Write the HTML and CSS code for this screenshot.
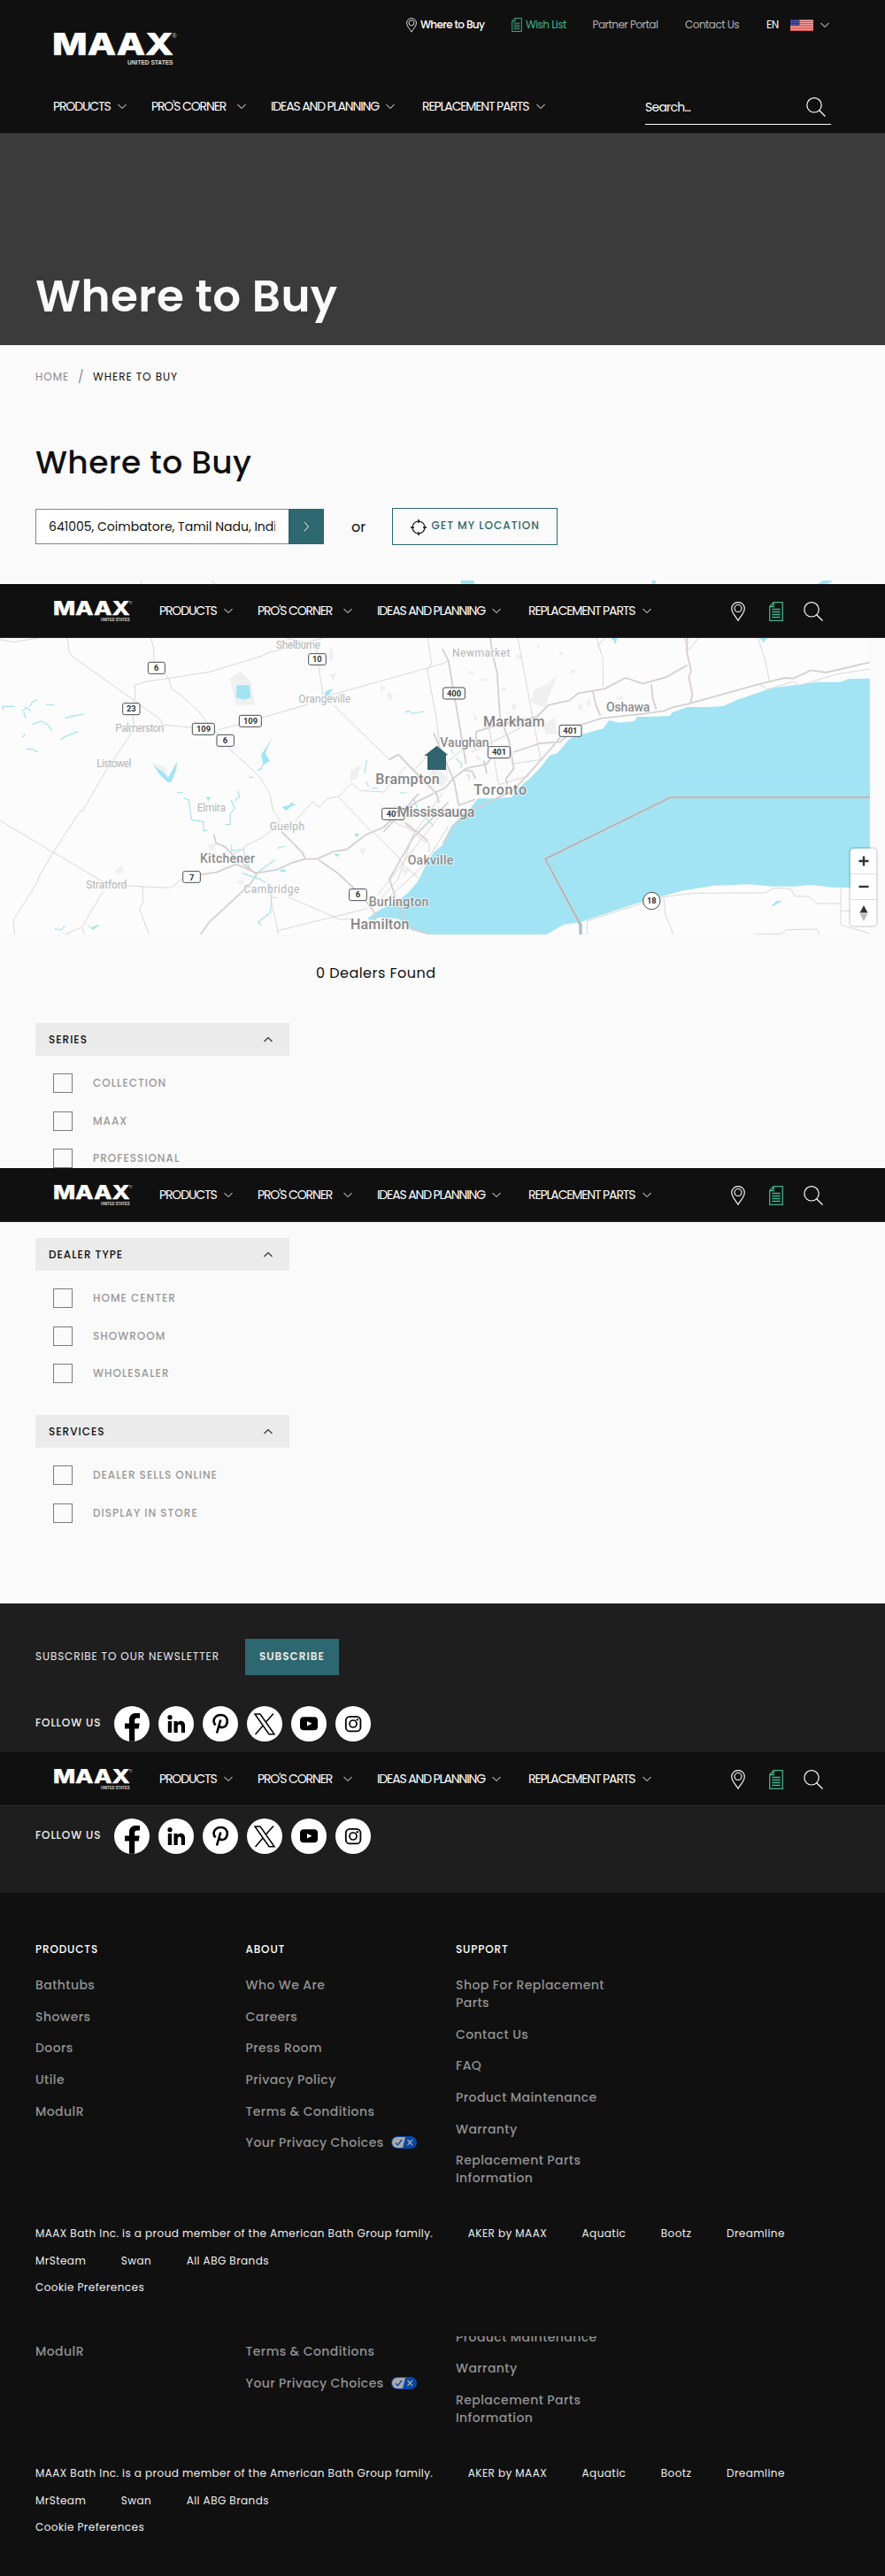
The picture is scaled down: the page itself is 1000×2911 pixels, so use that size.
FILE: index.html
```html
<!DOCTYPE html>
<html lang="en">
<head>
<meta charset="utf-8">
<title>Where to Buy | MAAX</title>
<link rel="stylesheet" href="styles.css">
</head>
<body>
<svg class="defs" aria-hidden="true">
  <symbol id="logo" viewBox="0 0 140 37" overflow="visible">
    <text x="-1" y="25.3" font-family="Inter, sans-serif" font-weight="800" font-size="34" textLength="137" lengthAdjust="spacingAndGlyphs" fill="#fff" stroke="#fff" stroke-width=".5">MAAX</text>
    <text x="84" y="35.5" font-family="Liberation Sans, sans-serif" font-size="7" font-weight="700" textLength="51.5" lengthAdjust="spacingAndGlyphs" fill="#ddd">UNITED STATES</text>
    <text x="134.5" y="5.5" font-family="Liberation Sans, sans-serif" font-size="7" fill="#ccc">®</text>
  </symbol>
  <symbol id="down" viewBox="0 0 10 7"><path d="M.5 1 5 5.500 9.500 1" fill="none" stroke="#fff" stroke-width="1"/></symbol>
  <symbol id="up" viewBox="0 0 10 7"><path d="M.5 6 5 1.500 9.500 6" fill="none" stroke="#333" stroke-width="1.200"/></symbol>
  <symbol id="pin" viewBox="0 0 16 22"><path d="M8 21.300C6.500 18 .7 12.800.7 7.700a7.300 7.100 0 0 1 14.600 0C15.300 12.800 9.500 18 8 21.300Z" fill="none" stroke="#fff" stroke-width="1.100"/><circle cx="8" cy="7.500" r="4" fill="none" stroke="#fff" stroke-width="1.100"/></symbol>
  <symbol id="doc" viewBox="0 0 16 22"><path d="M5.200.7H15.300V21.300H.7V5.500ZM5.200.7V5.500H.7M3.300 8.500H12.700M3.300 11.500H12.700M3.300 14.500H12.700M3.300 17.500H12.700" fill="none" stroke="#3eb489" stroke-width="1.300"/></symbol>
  <symbol id="search" viewBox="0 0 22 22"><circle cx="9" cy="8.800" r="8.200" fill="none" stroke="#fff" stroke-width="1.200"/><path d="M14.500 14.500 21.500 21.500" stroke="#fff" stroke-width="1.300"/></symbol>
  <symbol id="fb" viewBox="0 0 40 40"><circle cx="20" cy="20" r="20" fill="#fff"/><path d="M17 39.800V25.500H12V19.500H17V15.500C17 10.500 20 8 24.500 8H29V13.500H26C24 13.500 23.200 14.500 23.200 16V19.500H28.700L27.700 25.500H23.200V39.800Z"/></symbol>
  <symbol id="li" viewBox="0 0 40 40"><circle cx="20" cy="20" r="20" fill="#fff"/><circle cx="13" cy="12.700" r="2.600"/><path d="M10.800 17H15V30H10.800ZM17.500 17H21.500V18.800C24 15.500 30 16.300 30 22V30H25.800V23C25.800 19.500 21.700 19.700 21.700 23V30H17.500Z"/></symbol>
  <symbol id="pt" viewBox="0 0 40 40"><circle cx="20" cy="20" r="20" fill="#fff"/><path d="M14.500 21.500C10 16 14 9.800 21 10C28 10.500 29 17 26.500 21.500C24.500 24.500 20.500 25 18.800 22.500M20.300 15.500 16 30.500" fill="none" stroke="#000" stroke-width="2.600"/></symbol>
  <symbol id="xx" viewBox="0 0 40 40"><circle cx="20" cy="20" r="20" fill="#fff"/><path d="M9 9H15L31 31.800H25ZM30 8.500 21 18.500M18.500 21.500 9.500 32" fill="none" stroke="#000" stroke-width="1.500"/></symbol>
  <symbol id="yt" viewBox="0 0 40 40"><circle cx="20" cy="20" r="20" fill="#fff"/><rect x="10" y="12.300" width="20" height="15" rx="4"/><path d="M18 17V22.500L23.500 19.700Z" fill="#fff"/></symbol>
  <symbol id="ig" viewBox="0 0 40 40"><circle cx="20" cy="20" r="20" fill="#fff"/><rect x="11.800" y="11.800" width="16.600" height="16.600" rx="4.500" fill="none" stroke="#000" stroke-width="1.800"/><circle cx="20" cy="20" r="4" fill="none" stroke="#000" stroke-width="1.700"/><circle cx="24.800" cy="15.300" r="1.200"/></symbol>
  <symbol id="choices" viewBox="0 0 29 14"><rect width="29" height="14" rx="7" fill="#0a47a5"/><path d="M7 1H16L13 13H7A6 6 0 0 1 7 1Z" fill="#aaa"/><path d="M5 7.500 7.500 10 12 4" fill="none" stroke="#0a47a5" stroke-width="1.300"/><path d="M18.500 4 24 10M24 4 18.500 10" stroke="#aaa" stroke-width="1.200"/></symbol>
</svg>

<header class="header">
  <svg class="logo"><use href="#logo"/></svg>
  <ul class="top-links">
    <li class="buy"><svg><use href="#pin"/></svg>Where to Buy</li>
    <li class="wish"><svg><use href="#doc"/></svg>Wish List</li>
    <li class="portal">Partner Portal</li>
    <li class="contact">Contact Us</li>
    <li class="lang">EN
      <svg class="flag" viewBox="0 0 26 13"><rect width="26" height="13" fill="#e9a9a4"/><path d="M0 .5H26M0 2.500H26M0 4.500H26M0 6.500H26M0 8.500H26M0 10.500H26M0 12.500H26" stroke="#d9514e"/><rect width="10.500" height="7" fill="#2e3480"/><path d="M1 1.500H10M1 3.500H10M1 5.500H10" stroke="#8b8fc0" stroke-width=".7" stroke-dasharray="1 1"/></svg>
      <svg class="chev"><use href="#down"/></svg>
    </li>
  </ul>
  <nav class="nav main-nav">
    <a>PRODUCTS<svg><use href="#down"/></svg></a>
    <a class="pros">PRO'S CORNER<svg><use href="#down"/></svg></a>
    <a>IDEAS AND PLANNING<svg><use href="#down"/></svg></a>
    <a>REPLACEMENT PARTS<svg><use href="#down"/></svg></a>
  </nav>
  <div class="search"><span>Search...</span><svg><use href="#search"/></svg></div>
</header>

<section class="hero"><h1>Where to Buy</h1></section>

<section class="locator">
  <div class="crumbs"><span>HOME</span><i>/</i><b>WHERE TO BUY</b></div>
  <h2>Where to Buy</h2>
  <div class="locate">
    <div class="field"><span>641005, Coimbatore, Tamil Nadu, India</span></div>
    <div class="go"><svg viewBox="0 0 7 12"><path d="M1 1 5.500 6 1 11" fill="none" stroke="#fff"/></svg></div>
    <div class="or">or</div>
    <div class="gps"><svg viewBox="0 0 18 18"><circle cx="9" cy="9" r="7" fill="none" stroke="#111" stroke-width="1.200"/><path d="M9 0V4M9 14V18M0 9H4M14 9H18" stroke="#111" stroke-width="1.500"/></svg>GET MY LOCATION</div>
  </div>
</section>

<section class="map">
  <svg class="tiles" viewBox="0 18 2949 1200">
    <rect y="18" width="2949" height="1200" fill="#fcfcfc"/>
    <g fill="#f0f0f0">
      <path d="M780 350 815 325 850 360 865 440 800 440ZM1115 250H1130V290H1115ZM1115 335 1140 330 1130 360ZM1290 370 1310 385 1290 395ZM1315 395 1335 405 1325 425 1310 410ZM515 635 560 650 570 680 535 660ZM1190 660 1225 645 1210 690 1185 700ZM390 1000 415 985 418 1010 390 1010ZM1215 930 1245 920 1230 950ZM1850 370 1890 340 1860 410 1850 450 1800 430 1810 390ZM1840 510 1880 480 1890 540 1850 540ZM1480 650 1520 690 1500 720 1470 700ZM1360 990 1390 1000 1370 1020ZM700 915 735 910 720 935ZM800 1040 830 1030 820 1050Z"/>
      <path d="M1590 325h15v10h-15zM1710 260h12v16h-12zM1750 270h18v14h-18zM1820 235h8v12h-8zM1895 260h14v10h-14zM1735 435h15v20h-15zM1600 465l20 20-10 10zM1935 320h14v12h-14zM1960 435h14v22h-14zM1990 420h12v24h-12zM2090 410h20v12h-20zM1630 350h24v9h-24zM1610 610l25 10-15 10zM1700 380h16v12h-16z"/>
    </g>
    <g fill="#a2e4f4">
      <path d="M2949 350 2875 352 2850 362 2770 362 2700 372 2630 380 2600 388 2550 405 2500 422 2450 444 2400 447 2330 447 2280 465 2270 477 2190 480 2160 480 2150 495 2100 500 2065 492 2045 520 1970 540 1930 555 1890 603 1865 610 1830 655 1795 690 1770 710 1735 752 1680 757 1620 757 1595 790 1560 822 1530 850 1510 890 1500 915 1470 940 1440 990 1415 1040 1380 1080 1340 1110 1300 1128 1270 1145 1245 1165 1260 1170 1290 1160 1350 1165 1400 1200 1450 1218H1853L1910 1185 1970 1175 2060 1145 2150 1115 2240 1090 2310 1070 2420 1052 2540 1048 2620 1055 2690 1055 2750 1050 2820 1058 2880 1060 2949 1062Z"/>
      <path d="M1562 18H1608V29H1562ZM2210 18H2222V29H2210ZM2770 29 2790 18H2823L2805 29ZM803 373H845L850 415 830 422 800 415ZM1100 400 1110 390 1130 385 1115 405 1102 412ZM925 548 905 590 900 605 915 630 898 640 875 662 892 640 885 610 905 580ZM520 645 550 665 570 685 585 660 600 632 598 658 582 700 570 703 545 680ZM955 785 980 780 990 768 995 778 1010 776 985 785 970 798ZM2070 213H2092L2086 235 2080 222ZM2575 213H2602L2588 228ZM285 1175 310 1195 330 1185 355 1195 335 1188 315 1202ZM2613 1123 2632 1105 2652 1103 2625 1120ZM1130 945H1152L1145 955ZM1202 880 1210 873 1217 882 1208 888ZM698 752H715L706 765ZM950 998H968V1006H950Z"/>
    </g>
    <g class="creeks">
      <path d="M10 458V445H50M75 460 90 450 105 460M80 465 88 485M100 445 110 430 125 422M155 438 185 441M220 485 240 478 285 472M110 505 140 495 160 505 178 528M205 558 220 547 265 530M88 590H110L130 600M75 550 85 540M600 737H620M622 755 640 762 645 800 650 830 690 835 690 865 703 865M763 845H780V810L795 790 783 762M795 765 812 750 806 732M843 685H860M872 662 890 655M785 912V935L818 930M825 925 830 960 845 990M870 1010 905 985 932 965M940 925 968 918M820 1010 855 1022 880 1030 900 1042M915 1045 920 1110 915 1145 875 1175 885 1188M1243 625 1236 670M1240 700 1250 718M1262 722H1280M1372 465 1385 460 1400 468 1438 462M185 1198 205 1203 220 1190M1530 590 1535 605M1545 620 1565 640 1562 655M1582 678H1590V695M1355 738H1380M1400 755 1415 790M1440 820 1470 850"/>
    </g>
    <g class="roads">
      <path d="M0 218 45 227 130 213M228 213 235 260 245 275 455 425 545 490 550 507 690 520M512 213 520 245 523 300 572 350 583 388 615 408 670 458 705 503 740 540 785 597 835 640 885 690 915 742 926 800 950 830 915 870 885 892 835 915 825 930 790 945M455 430 460 395 455 373 500 360 710 328 885 275 910 263 1095 213M970 213 1065 235M1070 235 1080 310 1095 405M1100 412 1500 300M740 525 1045 438M1130 440 1320 625M450 470 455 515 443 540 360 660 280 800 270 802 180 940 130 1025V1035L45 1170 50 1218M0 832 350 1040 430 1053 580 1060 620 1027M484 1055V1110L473 1130 505 1218M350 1070 278 1193 220 1218M278 1193 285 1218M1000 835 1060 768 1082 787 1110 758 1148 750 1193 705 1220 730 1300 735 1375 650M1148 752 1255 865 1275 880 1345 950 1370 985 1420 1028M975 1090 1155 1168 1195 1165M940 1093H920V1110L942 1205 1245 1130M942 1205V1218M1450 213 1463 300 1448 318 1480 490 1490 570M1500 300 1520 290M478 18 480 28M716 18 730 28M2022 213 2043 280 2045 380M2025 240 2050 215M2320 213 2330 250M2330 260 2368 213M2570 213 2597 300 2608 358M2575 370 2600 387 2690 360 2705 375 2840 335 2949 318M1755 213 1833 625M1735 640 1835 625M1655 500 1690 710 1795 680M2250 1092 2255 1150 2283 1218M1990 1218V1172L2240 1092 2350 1078 2590 1077 2630 1060 2680 1063 2695 1088 2745 1090 2768 1113H2850M2850 1062V1185L2949 1215M2850 1138H2949M2555 1218 2650 1215 2665 1202 2770 1200 2778 1218"/>
      <path d="M1270 1120 1350 1030 1400 880 1500 740M1300 1110 1440 980 1520 850M1280 1085 1510 790M1350 820 1420 890 1455 910V940M1320 830 1410 870M1400 665 1450 610 1480 700M1430 700 1570 590M1600 600 1800 500"/>
    </g>
    <g class="highways">
      <path d="M725 880 732 908 762 920 790 950 870 1015 850 1045 760 1130 710 1175 680 1218M680 1015 735 1007 800 980 870 1010 940 998 990 975 1035 962 1075 962 1130 937 1175 930 1240 880 1300 855 1340 815 1410 770 1510 720 1535 690 1580 655 1650 640 1665 620M955 870 990 905 1025 940 1035 962M1080 965 1145 1010 1230 1090 1270 1145 1272 1170M1320 625 1350 608 1400 660 1480 740 1488 772M1300 870 1420 740M1340 1090 1320 1030 1400 890 1520 770M1340 1100 1395 1200 1460 1218M1375 840 1450 900M1500 250 1520 290 1580 640M1662 213 1668 260 1685 330 1695 480 1725 560 1742 655 1715 690 1720 710M1470 535 1540 700 1555 780 1610 760M1610 590 1615 530 1680 510 1820 480 1860 440 1930 425 1960 400 2050 385 2120 348 2180 368 2260 345 2330 305M2330 213 2328 260 2343 325 2335 345 2347 405 2340 435 2280 448 2250 460 2180 470 2040 485 1960 510 1900 565 1830 570 1740 600M2330 437 2570 370 2660 348 2690 350 2750 322 2800 330 2949 295M2010 395 2020 440 2035 475M2208 370 2213 420 2225 455M1640 628 1650 672M1570 660 1600 665 1612 690M1500 910 1570 810 1740 730 1835 625 1900 550"/>
    </g>
    <path class="shore-glow" d="M2949 753H2273L1848 962 1968 1185V1218"/>
    <path class="shore" d="M2949 753H2273L1848 962 1968 1185V1218"/>
    <g class="town">
      <text x="936" y="249" textLength="150">Shelburne</text><text x="1012" y="433" textLength="177">Orangeville</text><text x="391" y="532" textLength="165">Palmerston</text><text x="328" y="650" textLength="117">Listowel</text><text x="668" y="802" textLength="97">Elmira</text><text x="914" y="865" textLength="118">Guelph</text><text x="292" y="1063" textLength="138">Stratford</text><text x="826" y="1078" textLength="189">Cambridge</text><text x="1533" y="276" textLength="196">Newmarket</text>
    </g>
    <g class="city">
      <text x="678" y="976" textLength="186">Kitchener</text><text x="1492" y="581" textLength="166">Vaughan</text><text x="2055" y="461" textLength="148">Oshawa</text><text x="1382" y="980" textLength="155">Oakville</text><text x="1250" y="1121" textLength="203">Burlington</text>
    </g>
    <g class="shield">
      <rect x="502" y="295" width="57" height="39" rx="6"/><text x="530" y="324">6</text>
      <rect x="1046" y="266" width="59" height="38" rx="6"/><text x="1075" y="295">10</text>
      <rect x="416" y="434" width="58" height="39" rx="6"/><text x="445" y="463">23</text>
      <rect x="652" y="502" width="75" height="39" rx="6"/><text x="690" y="531">109</text>
      <rect x="811" y="475" width="75" height="39" rx="6"/><text x="849" y="504">109</text>
      <rect x="735" y="541" width="58" height="39" rx="6"/><text x="763" y="571">6</text>
      <rect x="1295" y="790" width="76" height="39" rx="6"/><text x="1334" y="819">401</text>
      <rect x="620" y="1004" width="59" height="38" rx="6"/><text x="650" y="1034">7</text>
      <rect x="1184" y="1064" width="59" height="39" rx="6"/><text x="1213" y="1093">6</text>
      <rect x="1502" y="381" width="74" height="39" rx="6"/><text x="1539" y="410">400</text>
      <rect x="1896" y="508" width="75" height="39" rx="6"/><text x="1933" y="537">401</text>
      <rect x="1654" y="581" width="75" height="39" rx="6"/><text x="1692" y="610">401</text>
      <circle cx="2209" cy="1104" r="29"/><text x="2209" y="1114">18</text>
    </g>
    <g class="metro">
      <text x="1273" y="707" textLength="217">Brampton</text><text x="1346" y="818" textLength="263">Mississauga</text><text x="1606" y="745" textLength="179">Toronto</text><text x="1638" y="512" textLength="208">Markham</text><text x="1188" y="1201" textLength="199">Hamilton</text>
    </g>
    <path d="M1481 578 1519 610H1512V660H1449V612H1438Z" fill="#30646e"/>
  </svg>
  <div class="zoomer">
    <span><svg viewBox="0 0 12 12"><path d="M6 .5V11.500M.5 6H11.500" stroke="#333" stroke-width="2.400"/></svg></span>
    <span><svg viewBox="0 0 12 12"><path d="M.5 6H11.500" stroke="#333" stroke-width="2.400"/></svg></span>
    <span><svg viewBox="0 0 10 18"><path d="M5 0 9.500 8.500H.5Z" fill="#333"/><path d="M5 18 9.500 9.500H.5Z" fill="#bbb"/></svg></span>
  </div>
  <div class="bar over">
    <svg class="logo"><use href="#logo"/></svg>
    <nav class="nav">
      <a>PRODUCTS<svg><use href="#down"/></svg></a><a class="pros">PRO'S CORNER<svg><use href="#down"/></svg></a><a>IDEAS AND PLANNING<svg><use href="#down"/></svg></a><a>REPLACEMENT PARTS<svg><use href="#down"/></svg></a>
    </nav>
    <div class="tools"><svg class="i16"><use href="#pin"/></svg><svg class="i16"><use href="#doc"/></svg><svg class="i22"><use href="#search"/></svg></div>
  </div>
</section>

<section class="results">
  <p class="count">0 Dealers Found</p>
  <div class="filter">
    <h3>SERIES<svg><use href="#up"/></svg></h3>
    <label><i></i>COLLECTION</label><label><i></i>MAAX</label><label class="tight"><i></i>PROFESSIONAL</label>
  </div>
</section>

<div class="bar">
  <svg class="logo"><use href="#logo"/></svg>
  <nav class="nav">
    <a>PRODUCTS<svg><use href="#down"/></svg></a><a class="pros">PRO'S CORNER<svg><use href="#down"/></svg></a><a>IDEAS AND PLANNING<svg><use href="#down"/></svg></a><a>REPLACEMENT PARTS<svg><use href="#down"/></svg></a>
  </nav>
  <div class="tools"><svg class="i16"><use href="#pin"/></svg><svg class="i16"><use href="#doc"/></svg><svg class="i22"><use href="#search"/></svg></div>
</div>

<section class="more">
  <div class="filter">
    <h3>DEALER TYPE<svg><use href="#up"/></svg></h3>
    <label><i></i>HOME CENTER</label><label><i></i>SHOWROOM</label><label class="tight"><i></i>WHOLESALER</label>
  </div>
  <div class="filter">
    <h3>SERVICES<svg><use href="#up"/></svg></h3>
    <label><i></i>DEALER SELLS ONLINE</label><label><i></i>DISPLAY IN STORE</label>
  </div>
</section>

<section class="newsletter">
  <div class="subscribe"><span>SUBSCRIBE TO OUR NEWSLETTER</span><b>SUBSCRIBE</b></div>
  <div class="follow"><span>FOLLOW US</span><svg><use href="#fb"/></svg><svg><use href="#li"/></svg><svg><use href="#pt"/></svg><svg><use href="#xx"/></svg><svg><use href="#yt"/></svg><svg><use href="#ig"/></svg></div>
</section>

<div class="bar">
  <svg class="logo"><use href="#logo"/></svg>
  <nav class="nav">
    <a>PRODUCTS<svg><use href="#down"/></svg></a><a class="pros">PRO'S CORNER<svg><use href="#down"/></svg></a><a>IDEAS AND PLANNING<svg><use href="#down"/></svg></a><a>REPLACEMENT PARTS<svg><use href="#down"/></svg></a>
  </nav>
  <div class="tools"><svg class="i16"><use href="#pin"/></svg><svg class="i16"><use href="#doc"/></svg><svg class="i22"><use href="#search"/></svg></div>
</div>

<section class="social">
  <div class="follow"><span>FOLLOW US</span><svg><use href="#fb"/></svg><svg><use href="#li"/></svg><svg><use href="#pt"/></svg><svg><use href="#xx"/></svg><svg><use href="#yt"/></svg><svg><use href="#ig"/></svg></div>
</section>

<footer class="footer">
  <div class="cols">
    <div><h4>PRODUCTS</h4><a>Bathtubs</a><a>Showers</a><a>Doors</a><a>Utile</a><a>ModulR</a></div>
    <div><h4>ABOUT</h4><a>Who We Are</a><a>Careers</a><a>Press Room</a><a>Privacy Policy</a><a>Terms &amp; Conditions</a><a>Your Privacy Choices<svg><use href="#choices"/></svg></a></div>
    <div><h4>SUPPORT</h4><a>Shop For Replacement<br>Parts</a><a>Contact Us</a><a>FAQ</a><a>Product Maintenance</a><a>Warranty</a><a>Replacement Parts<br>Information</a></div>
  </div>
  <div class="legal">
    <span>MAAX Bath Inc. is a proud member of the American Bath Group family.</span><span>AKER by MAAX</span><span>Aquatic</span><span>Bootz</span><span>Dreamline</span><span>MrSteam</span><span>Swan</span><span>All ABG Brands</span>
  </div>
  <div class="cookie">Cookie Preferences</div>
</footer>

<footer class="footer tail">
  <div class="cols">
    <div class="first"><a>ModulR</a></div>
    <div class="second"><a>Terms &amp; Conditions</a><a>Your Privacy Choices<svg><use href="#choices"/></svg></a></div>
    <div class="third"><a>Product Maintenance</a><a>Warranty</a><a>Replacement Parts<br>Information</a></div>
  </div>
  <div class="legal">
    <span>MAAX Bath Inc. is a proud member of the American Bath Group family.</span><span>AKER by MAAX</span><span>Aquatic</span><span>Bootz</span><span>Dreamline</span><span>MrSteam</span><span>Swan</span><span>All ABG Brands</span>
  </div>
  <div class="cookie">Cookie Preferences</div>
</footer>
</body>
</html>
```
FILE: styles.css
```css
* { box-sizing: border-box; margin: 0; padding: 0; }
body { width: 1000px; background: #fafafa; color: #101010; font-family: Poppins, Inter, sans-serif; overflow-x: hidden; }
svg { display: block; flex: none; }
ul { list-style: none; }
i { font-style: normal; }
.defs { width: 0; height: 0; position: absolute; }

/* Header */
.header { height: 151px; background: #101010; border-bottom: 1px solid #2b2b2b; color: #fff; display: grid; grid-template-columns: 669px 210px; grid-template-rows: 37px 48px; row-gap: 19px; padding: 37px 61px 0 60px; }
.header .logo { width: 140px; height: 37px; grid-column: 1; grid-row: 1; }
.top-links { grid-column: 1 / 3; grid-row: 1; display: flex; height: 20px; margin: -19px 0 0 399px; align-items: center; font-size: 12px; line-height: 20px; letter-spacing: -.53px; white-space: nowrap; }
.top-links li { display: flex; align-items: center; }
.buy { width: 119px; font-weight: 500; letter-spacing: -.63px; }
.buy svg { width: 12px; height: 17px; margin-right: 4px; }
.wish { width: 91.5px; color: #3eb489; }
.wish svg { width: 12px; height: 16px; margin-right: 4px; }
.portal { width: 104.5px; color: #b0b0b0; }
.contact { width: 92px; color: #b0b0b0; }
.flag { width: 26px; height: 13px; margin-left: 13px; }
.lang .chev { width: 10px; height: 7px; margin-left: 8px; }
.nav { display: grid; grid-template-columns: 111px 135px 171px 150px; align-items: start; font-size: 14px; letter-spacing: -1.13px; line-height: 20px; color: #fff; white-space: nowrap; }
.nav a { display: flex; align-items: center; }
.nav svg { width: 10px; height: 7px; margin-left: 8.5px; }
.nav .pros svg { margin-left: 12.5px; }
.main-nav { grid-column: 1; grid-row: 2; padding-top: 17px; }
.search { grid-column: 2; grid-row: 2; height: 48px; padding: 17px 6px 7px 0; display: flex; justify-content: space-between; align-items: flex-start; border-bottom: 1px solid #fff; font-size: 14px; letter-spacing: -.75px; line-height: 23px; }
.search svg { width: 22px; height: 22px; }

/* Hero and locator */
.hero { height: 239px; background: #3b3b3b; padding: 147px 40px 0; }
h1 { font-size: 50px; font-weight: 600; letter-spacing: .4px; line-height: 74px; color: #fafafa; }
.locator { height: 266px; padding: 26px 40px 0; }
.crumbs { display: flex; font-size: 12px; line-height: 20px; letter-spacing: .96px; color: #8a8a8a; }
.crumbs i { width: 27px; padding-left: 10px; font-size: 14px; }
.crumbs b { font-weight: 400; color: #101010; }
h2 { margin-top: 62px; font-size: 36px; font-weight: 500; line-height: 50px; letter-spacing: .4px; }
.locate { display: flex; align-items: center; margin-top: 26px; height: 42px; }
.field { width: 286px; height: 40px; border: 1px solid #888; border-right: 0; background: #fff; padding: 0 15px 0 14px; font-size: 14px; line-height: 38px; }
.field span { display: block; overflow: hidden; white-space: nowrap; }
.go { width: 40px; height: 40px; background: #2d6770; display: grid; place-items: center; }
.go svg { width: 7px; height: 12px; }
.or { width: 77px; padding-left: 31px; font-size: 16px; }
.gps { width: 187px; height: 42px; border: 1px solid #2d6770; display: flex; align-items: center; padding: 0 0 2px 20px; font-size: 12px; font-weight: 500; letter-spacing: 1.04px; color: #2d6770; white-space: nowrap; }
.gps svg { width: 18px; height: 18px; margin: 4px 5.5px 0 0; }

/* Map */
.map { position: relative; height: 400px; }
.tiles { width: 983px; height: 400px; }
.roads, .highways, .creeks { fill: none; stroke: #dbd7d8; stroke-width: 3; stroke-linejoin: round; }
.highways { stroke: #d5d0d2; stroke-width: 5.5; }
.creeks { stroke: #a2e4f4; stroke-width: 3.5; }
.shore, .shore-glow { fill: none; stroke: #b2b2b3; stroke-width: 5; }
.shore-glow { stroke: #b8dde5; stroke-width: 13; }
.tiles text { font-family: Roboto, sans-serif; }
.town text, .city text, .metro text { paint-order: stroke; stroke: #fcfcfc; stroke-width: 5px; stroke-opacity: .8; }
.town { font-size: 36px; fill: #b5b5b5; }
.city { font-size: 42px; fill: #8c8c8c; font-weight: 500; }
.metro { font-size: 48px; fill: #858585; font-weight: 500; }
.shield rect, .shield circle { fill: #fff; stroke: #474b55; stroke-width: 3; }
.shield text { font-size: 28px; font-weight: 700; fill: #333; text-anchor: middle; }
.zoomer { position: absolute; left: 959px; top: 301px; width: 33px; border: 2px solid rgba(0,0,0,.1); border-radius: 6px; background: #fff; background-clip: padding-box; }
.zoomer span { height: 29px; display: grid; place-items: center; border-bottom: 1px solid #ddd; }
.zoomer span:last-child { border: 0; }
.zoomer svg { width: 12px; height: 12px; }
.zoomer span:last-child svg { width: 10px; height: 18px; }

/* Condensed navigation bar */
.bar { height: 61px; background: #101010; border-bottom: 1px solid #2b2b2b; display: flex; align-items: flex-start; padding: 19px 70px 0 60px; }
.bar.over { position: absolute; left: 0; top: 4px; width: 1000px; }
.bar .logo { width: 90px; height: 23.5px; margin-right: 30px; }
.bar .nav { width: 646px; margin-top: 1px; }
.tools { display: flex; margin-top: 1px; }
.tools svg { height: 22px; }
.tools .i16 { width: 16px; margin-right: 26.5px; }
.tools .i16 + .i16 { margin-right: 23px; }
.tools .i22 { width: 22px; }

/* Filters */
.results { height: 264px; overflow: hidden; padding: 32px 40px 0; }
.count { margin: 0 0 44px 317px; font-size: 16px; line-height: 24px; letter-spacing: .47px; }
.filter { width: 287px; }
.filter h3 { height: 37px; display: flex; justify-content: space-between; align-items: center; margin-bottom: 20px; background: #ebebeb; padding: 0 19px 0 15px; font-size: 12px; font-weight: 500; letter-spacing: 1.02px; }
.filter h3 svg { width: 10px; height: 7px; }
.filter label { display: flex; align-items: center; height: 22px; margin-bottom: 21px; padding-left: 20px; font-size: 12px; font-weight: 500; letter-spacing: 1.02px; color: #999; }
.filter label.tight { margin-top: -1px; }
.filter label i { width: 22px; height: 22px; margin-right: 23px; border: 1px solid #7c7c7c; }
.more { height: 431px; padding: 18px 40px 0; }
.more .filter + .filter { margin-top: 36px; }

/* Newsletter and social */
.newsletter { height: 168px; background: #1e1e1e; padding: 40px 40px 0; }
.subscribe { display: flex; align-items: flex-start; height: 41px; margin-bottom: 35px; font-size: 12px; line-height: 40px; letter-spacing: .88px; color: #e8e8e8; }
.subscribe span { width: 237px; }
.subscribe b { width: 106px; height: 41px; padding-left: 16px; background: #2d6770; font-weight: 600; letter-spacing: .97px; }
.follow { display: flex; align-items: center; height: 40px; gap: 10px; font-size: 12px; font-weight: 500; letter-spacing: .9px; line-height: 18px; color: #eee; }
.follow span { width: 79px; padding-bottom: 2px; white-space: nowrap; }
.follow svg { width: 40px; height: 40px; }
.social { height: 98px; background: #1e1e1e; padding: 14px 40px 0; }

/* Footer */
.footer { height: 501px; background: #101010; color: #eee; padding: 54px 40px 0; }
.cols { display: grid; grid-template-columns: 237.5px 237.5px 237.5px; height: 307px; }
.footer h4 { height: 40px; font-size: 12px; line-height: 20px; font-weight: 500; letter-spacing: .85px; color: #fff; }
.footer a { display: flex; align-items: center; margin-bottom: 15.7px; font-size: 14px; line-height: 20px; font-weight: 500; letter-spacing: .42px; color: #929292; white-space: nowrap; }
.footer a svg { width: 29px; height: 14px; margin-left: 8px; }
.legal { display: flex; flex-wrap: wrap; gap: 11px 39.5px; margin-top: 14px; font-size: 12px; line-height: 20px; letter-spacing: .44px; white-space: nowrap; }
.cookie { margin-top: 10px; font-size: 12px; line-height: 20px; letter-spacing: .44px; }
.tail { height: 271px; margin-top: 0; padding-top: 0; overflow: hidden; }
.tail .cols { height: 131px; overflow: hidden; }
.tail .first, .tail .second { padding-top: 7px; }
.tail .third { margin-top: -9.5px; }
```
